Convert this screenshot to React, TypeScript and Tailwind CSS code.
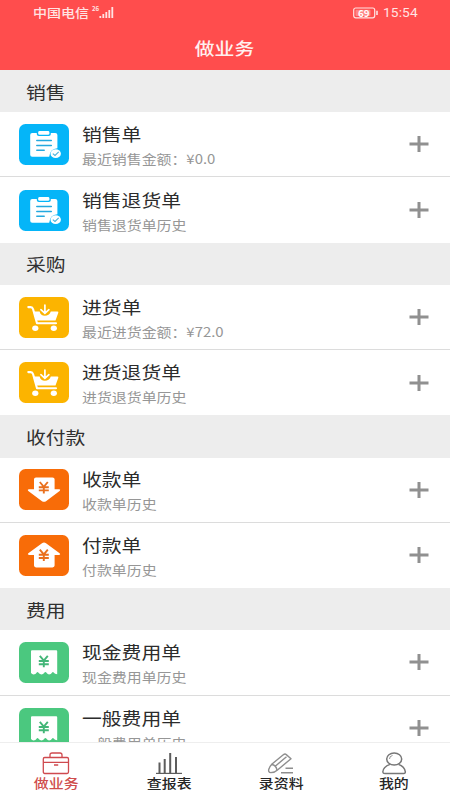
import type { ReactNode } from "react";

const CARD = "h-[41px] w-[50px] shrink-0";

function Yen({ y, color }: { y: number; color: string }) {
  return (
    <g stroke={color} strokeWidth="1.9" fill="none" transform={`translate(24.8 ${y})`}>
      <path d="M-4-5.4L0-.6L4-5.4M0-.6V6M-5-.2H5M-5 3H5" />
    </g>
  );
}

function OrderIcon() {
  return (
    <svg viewBox="0 0 50 41" className={CARD}>
      <rect width="50" height="41" rx="6.5" fill="#05b5f8" />
      <path d="M13.2 9H17.8V10.2Q17.8 12 19.8 12H29.8Q31.8 12 31.8 10.2V9H36.2Q38.4 9 38.4 11V24.2Q31 24.6 30.2 32.8H13.2Q11.2 32.8 11.2 30.8V11Q11.2 9 13.2 9Z" fill="#fff" />
      <rect x="19.2" y="7" width="11.2" height="3.8" rx="1.4" fill="#fff" />
      <path d="M17.8 16.6H32.3M17.8 21.4H32.3M17.8 26.3H25.2" stroke="#24a9df" strokeWidth="1.5" strokeLinecap="round" />
      <ellipse cx="36.7" cy="29.7" rx="5.2" ry="4.4" fill="#fff" />
      <path d="M33.8 29.6L36 31.4L39.7 27.9" fill="none" stroke="#4ab1d9" strokeWidth="1.1" />
    </svg>
  );
}

function CartIcon() {
  return (
    <svg viewBox="0 0 50 41" className={CARD}>
      <rect width="50" height="41" rx="6.5" fill="#fcb400" />
      <path d="M9.3 10.1H11.6Q13.5 10.2 14.1 12.2L18 26.2H37" fill="none" stroke="#fff" strokeWidth="2.1" strokeLinecap="round" strokeLinejoin="round" />
      <path d="M14.2 14.4H20.6Q21.8 18.8 25.8 18.8Q30.2 18.8 31.8 14.4H38.3Q39.7 14.4 39.3 15.8L36.5 23.4H17.2Z" fill="#fff" />
      <path d="M25.9 8V15.8M21.9 12.7L25.9 16.3L29.9 12.7" fill="none" stroke="#fff" strokeWidth="1.7" strokeLinecap="round" />
      <ellipse cx="16.3" cy="31.2" rx="3.1" ry="2.7" fill="#fff" />
      <ellipse cx="34.8" cy="31.2" rx="3.1" ry="2.7" fill="#fff" />
    </svg>
  );
}

function ReceiveIcon() {
  return (
    <svg viewBox="0 0 50 41" className={CARD}>
      <rect width="50" height="41" rx="6.5" fill="#f86c08" />
      <path d="M17 8.4H33.5Q35.6 8.4 35.6 10.2V20.3H40.2Q42 20.6 40.6 22L27 32.2Q25 33.4 23 32.2L9.3 22Q8 20.6 10 20.3H15V10.2Q15 8.4 17 8.4Z" fill="#fff" />
      <Yen y={18.4} color="#e9701e" />
    </svg>
  );
}

function PayIcon() {
  return (
    <svg viewBox="0 0 50 41" className={CARD}>
      <rect width="50" height="41" rx="6.5" fill="#f86c08" />
      <path d="M17 32.4H33.5Q35.6 32.4 35.6 30.6V20H40.2Q42 19.6 40.6 18.3L27 8.2Q25 7 23 8.2L9.3 18.3Q8 19.6 10 20H15V30.6Q15 32.4 17 32.4Z" fill="#fff" />
      <Yen y={20} color="#e9701e" />
    </svg>
  );
}

function ExpenseIcon() {
  return (
    <svg viewBox="0 0 50 41" className={CARD}>
      <rect width="50" height="41" rx="6.5" fill="#4bc87f" />
      <path d="M13 8.3H37.2Q38.2 8.3 38.2 9.3V32.2Q35.8 32 34.4 30.2Q33.9 29.7 33.4 30.2Q31.9 32.4 30 32.4Q28.4 32.2 27 30.2Q26.4 29.6 25.8 30.2Q24.1 32.4 22.3 32.4Q20.5 32.2 19 30.2Q18.5 29.7 18 30.2Q16.6 32.4 14.5 32.4Q13.1 32 12 30.9V9.3Q12 8.3 13 8.3Z" fill="#fff" />
      <Yen y={19.2} color="#43b678" />
    </svg>
  );
}

type Item = { title: string; note: string; icon: ReactNode };

const SECTIONS: { name: string; items: Item[] }[] = [
  {
    name: "销售",
    items: [
      { title: "销售单", note: "最近销售金额：¥0.0", icon: <OrderIcon /> },
      { title: "销售退货单", note: "销售退货单历史", icon: <OrderIcon /> },
    ],
  },
  {
    name: "采购",
    items: [
      { title: "进货单", note: "最近进货金额：¥72.0", icon: <CartIcon /> },
      { title: "进货退货单", note: "进货退货单历史", icon: <CartIcon /> },
    ],
  },
  {
    name: "收付款",
    items: [
      { title: "收款单", note: "收款单历史", icon: <ReceiveIcon /> },
      { title: "付款单", note: "付款单历史", icon: <PayIcon /> },
    ],
  },
  {
    name: "费用",
    items: [
      { title: "现金费用单", note: "现金费用单历史", icon: <ExpenseIcon /> },
      { title: "一般费用单", note: "一般费用单历史", icon: <ExpenseIcon /> },
    ],
  },
];

function Row({ item, last }: { item: Item; last: boolean }) {
  return (
    <div className={`flex h-[65.25px] items-center pr-[21px] pl-[19px] ${last ? "" : "border-b border-[#dcdcdc]"}`}>
      {item.icon}
      <div className="ml-[12.5px] flex flex-1 flex-col items-start pt-[3px] whitespace-nowrap">
        <span className="origin-left scale-x-[1.165] text-[17px] leading-[25px] text-[#2c2c2c]">{item.title}</span>
        <span className="origin-left scale-x-[1.165] text-[12.8px] leading-[25px] text-[#969696]">{item.note}</span>
      </div>
      <svg viewBox="0 0 20 18" className="h-[18px] w-5">
        <path d="M.5 9H19.5M10 1V17" stroke="#909090" strokeWidth="3" fill="none" />
      </svg>
    </div>
  );
}

function StatusBar() {
  return (
    <div className="flex h-[26px] items-center pr-8 pl-[33px] text-[#ffe3e3]">
      <span className="w-[57px] origin-left scale-x-[1.13] text-[12.4px] leading-none font-medium whitespace-nowrap">中国电信</span>
      <span className="ml-[2px] w-[7px] self-start pt-[6px] text-[6px] leading-none font-bold">26</span>
      <svg viewBox="0 0 15 12" className="h-3 w-[15px]">
        <path d="M1.3 9V11M4.3 7V11M7.3 5V11M10.3 3V11M13.3 0V11" stroke="currentColor" strokeWidth="1.8" />
      </svg>
      <svg viewBox="0 0 26 12" className="ml-auto h-3 w-[26px]">
        <rect x=".7" y="1" width="21" height="9.8" rx="2" fill="none" stroke="currentColor" strokeWidth="1.2" />
        <rect x="2.5" y="2.7" width="15" height="6.4" rx="1" fill="#ff8585" />
        <path d="M24 3.8V8" stroke="currentColor" strokeWidth="1.6" />
        <text x="5" y="9.5" fontSize="9.5" fontWeight="700" fill="#fff" textLength="11.5" lengthAdjust="spacingAndGlyphs">69</text>
      </svg>
      <span className="ml-[4px] w-[35px] origin-left scale-x-[1.1] font-[Roboto] text-[12.5px] leading-none tracking-[0.1px]">15:54</span>
    </div>
  );
}

function CaseIcon() {
  return (
    <svg viewBox="0 0 28 23" className="h-[23px] w-7" fill="none" stroke="#cf4a4f" strokeWidth="1.3">
      <rect x="1.3" y="5.5" width="25.2" height="16" rx="1.4" />
      <path d="M1.3 10.3H26.5M8 5.3V3Q8 1 10 1H18Q20 1 20 3V5.3M12 13H16.2" />
    </svg>
  );
}

function ChartIcon() {
  return (
    <svg viewBox="0 0 28 23" className="h-[23px] w-7" fill="none" stroke="#5d5d5d">
      <path d="M1 21.4H27" strokeWidth="1.2" />
      <path d="M4.5 10.5V21M9.7 7V21M15.2 1V21M21 5V21" strokeWidth="2" />
    </svg>
  );
}

function PencilIcon() {
  return (
    <svg viewBox="0 0 28 23" className="h-[23px] w-7" fill="none" stroke="#8e8e8e" strokeWidth="1.4" strokeLinejoin="round">
      <path d="M1.8 17.3Q3 14 5 12L16 3Q18 1.5 19 2.4L24 6.7L10.5 18Q8 20.5 3.8 20.6Q1 20.2 1.8 17.3Z" />
      <path d="M4.7 12.5Q9 13 10 18M8.2 14.2L19.5 4.8M18.5 16.2H26M14 20.8H26" />
    </svg>
  );
}

function PersonIcon() {
  return (
    <svg viewBox="0 0 28 23" className="h-[23px] w-7" fill="none" stroke="#777" strokeWidth="1.5">
      <ellipse cx="14.2" cy="7" rx="7.5" ry="6" />
      <path d="M10 12.4Q3 15 2.8 20Q3 21.6 5 21.6H23.7Q25.5 21.5 25.3 19.6Q24.5 14.5 18.5 12.4" />
      <path d="M9.5 7Q9.5 4 12.5 3.5" strokeWidth=".8" />
    </svg>
  );
}

const TABS = [
  { label: "做业务", icon: <CaseIcon />, tone: "text-[#cf4d4c]" },
  { label: "查报表", icon: <ChartIcon />, tone: "text-[#252525]" },
  { label: "录资料", icon: <PencilIcon />, tone: "text-[#252525]" },
  { label: "我的", icon: <PersonIcon />, tone: "text-[#252525]" },
];

export default function App() {
  return (
    <div className="flex h-[800px] w-[450px] flex-col overflow-hidden bg-white font-['Noto_Sans_CJK_SC',sans-serif]">
      <header className="h-[70px] shrink-0 bg-[#ff4d4d]">
        <StatusBar />
        <h1 className="flex h-[42px] items-center justify-center pr-px">
          <span className="scale-x-[1.165] text-[17px] leading-none font-medium text-[#fff0f0]">做业务</span>
        </h1>
      </header>
      <main className="min-h-0 flex-1 overflow-hidden">
        {SECTIONS.map((s) => (
          <section key={s.name}>
            <h2 className="flex h-[42.2px] items-center bg-[#ededed] pl-[25.5px]">
              <span className="origin-left scale-x-[1.165] text-[17px] leading-none text-[#303030]">{s.name}</span>
            </h2>
            {s.items.map((item, i) => (
              <Row key={item.title} item={item} last={i === s.items.length - 1} />
            ))}
          </section>
        ))}
      </main>
      <nav className="grid h-[58px] shrink-0 grid-cols-4 border-t border-[#eeeeee] bg-white">
        {TABS.map((t) => (
          <div key={t.label} className="flex flex-col items-center pt-[9px]">
            {t.icon}
            <span className={`scale-x-[1.165] text-[12.8px] leading-[16px] font-medium ${t.tone}`}>{t.label}</span>
          </div>
        ))}
      </nav>
    </div>
  );
}
